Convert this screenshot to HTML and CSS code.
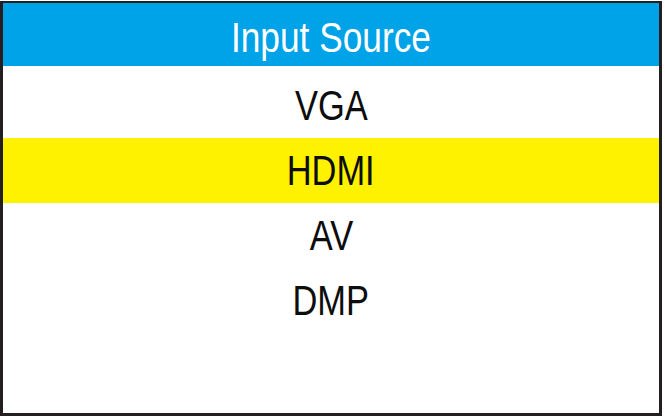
FILE: index.html
```html
<!DOCTYPE html>
<html>
<head>
<meta charset="utf-8">
<link rel="stylesheet" href="styles.css">
</head>
<body>
<div class="frame">
  <div class="header"><span class="label">Input Source</span></div>
  <ul class="list">
    <li class="item"><span class="label">VGA</span></li>
    <li class="item selected"><span class="label">HDMI</span></li>
    <li class="item"><span class="label">AV</span></li>
    <li class="item"><span class="label">DMP</span></li>
  </ul>
</div>
</body>
</html>
```
FILE: styles.css
```css
html, body {
  margin: 0;
  padding: 0;
  background: #ffffff;
}
body {
  width: 665px;
  height: 416px;
  overflow: hidden;
}
.frame {
  box-sizing: border-box;
  margin-top: 1px;
  width: 662px;
  height: 415px;
  border: 3px solid #231f20;
  border-top-width: 2px;
  display: flex;
  flex-direction: column;
  font-family: "Liberation Sans", Arial, sans-serif;
}
.label {
  display: inline-block;
  transform: scaleX(0.82);
  white-space: nowrap;
}
.header {
  box-sizing: border-box;
  height: 63px;
  padding-top: 5px;
  background: #00a2e8;
  color: #ffffff;
  font-size: 43px;
  display: flex;
  align-items: center;
  justify-content: center;
}
.list {
  list-style: none;
  margin: 0;
  padding: 7px 0 0;
}
.item {
  height: 65px;
  display: flex;
  align-items: center;
  justify-content: center;
  font-size: 42px;
  color: #0d0d0d;
}
.selected {
  background: #fff200;
}
```
